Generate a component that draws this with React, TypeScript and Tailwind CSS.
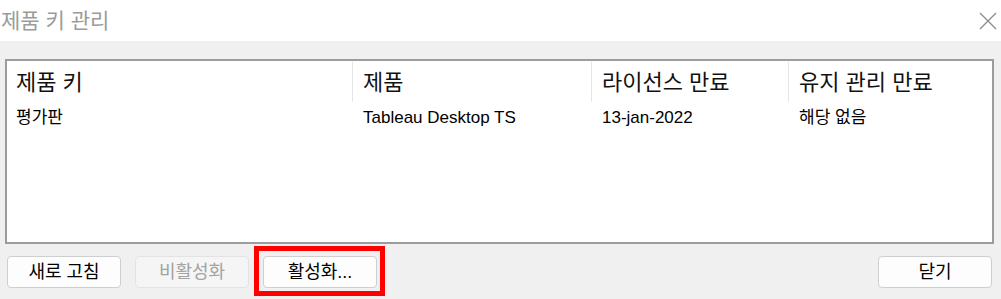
import React from 'react'

const font = "font-['Liberation_Sans','Noto_Sans_CJK_KR',sans-serif]"

const columns = [
    { title: '제품 키', width: 'w-[346px]', pad: 'pl-[9px]' },
    { title: '제품', width: 'w-[239px]', pad: 'pl-[10px]' },
    { title: '라이선스 만료', width: 'w-[197px]', pad: 'pl-[10px]' },
    { title: '유지 관리 만료', width: 'flex-1', pad: 'pl-[10px]' },
]

const rows = [['평가판', 'Tableau Desktop TS', '13-jan-2022', '해당 없음']]

const Button = ({ label, disabled }: { label: string; disabled?: boolean }) => (
    <button
        className={
            disabled
                ? 'w-[114px] h-[32px] rounded-[4px] border border-[#e3e3e3] bg-[#f5f5f5] text-[18px] text-[#a3a3a3]'
                : 'w-[114px] h-[32px] rounded-[4px] border border-[#cfcfcf] bg-[#fdfdfd] text-[18px] text-black'
        }
    >
        {label}
    </button>
)

const App = () => {
    return (
        <div className={`w-[1001px] h-[299px] bg-[#f0f0f0] overflow-hidden ${font}`}>
            {/* title bar */}
            <div className='h-[41px] bg-white flex items-center justify-between'>
                <span className='pl-px text-[21px] text-[#9b9b9b] leading-none'>제품 키 관리</span>
                <svg width='18' height='18' viewBox='0 0 18 18' className='mr-[4px]'>
                    <path d='M1 1 L17 17 M17 1 L1 17' stroke='#8c8c8c' strokeWidth='1.3' fill='none' />
                </svg>
            </div>

            {/* list */}
            <div className='px-[5px] pr-[7px] pt-[18px]'>
                <div className='h-[185px] bg-white border-2 border-[#9c9c9c]'>
                    <div className='flex h-[41px] pt-px'>
                        {columns.map((col, i) => (
                            <div
                                key={i}
                                className={`${col.width} ${col.pad} shrink-0 flex items-center text-[22px] text-[#111] ${i < 3 ? 'border-r border-[#e6e6e6]' : ''}`}
                            >
                                {col.title}
                            </div>
                        ))}
                    </div>
                    {rows.map((row, r) => (
                        <div key={r} className='flex h-[31px]'>
                            {row.map((cell, i) => (
                                <div
                                    key={i}
                                    className={`${columns[i].width} ${i === 0 ? 'pl-[9px]' : 'pl-[10px]'} ${i < 3 ? 'pr-px' : ''} shrink-0 flex items-center text-[17px] text-black`}
                                >
                                    {cell}
                                </div>
                            ))}
                        </div>
                    ))}
                </div>
            </div>

            {/* buttons */}
            <div className='flex items-center pl-[7px] pr-[9px] pt-[12px]'>
                <div className='flex gap-[14px]'>
                    <Button label='새로 고침' />
                    <Button label='비활성화' disabled />
                    <div className='relative'>
                        <Button label='활성화...' />
                        <div className='absolute -left-[9px] -top-[10px] -right-[8px] -bottom-[8px] border-[5px] border-[#ff0000] pointer-events-none' />
                    </div>
                </div>
                <div className='ml-auto'>
                    <Button label='닫기' />
                </div>
            </div>
        </div>
    )
}

export default App
